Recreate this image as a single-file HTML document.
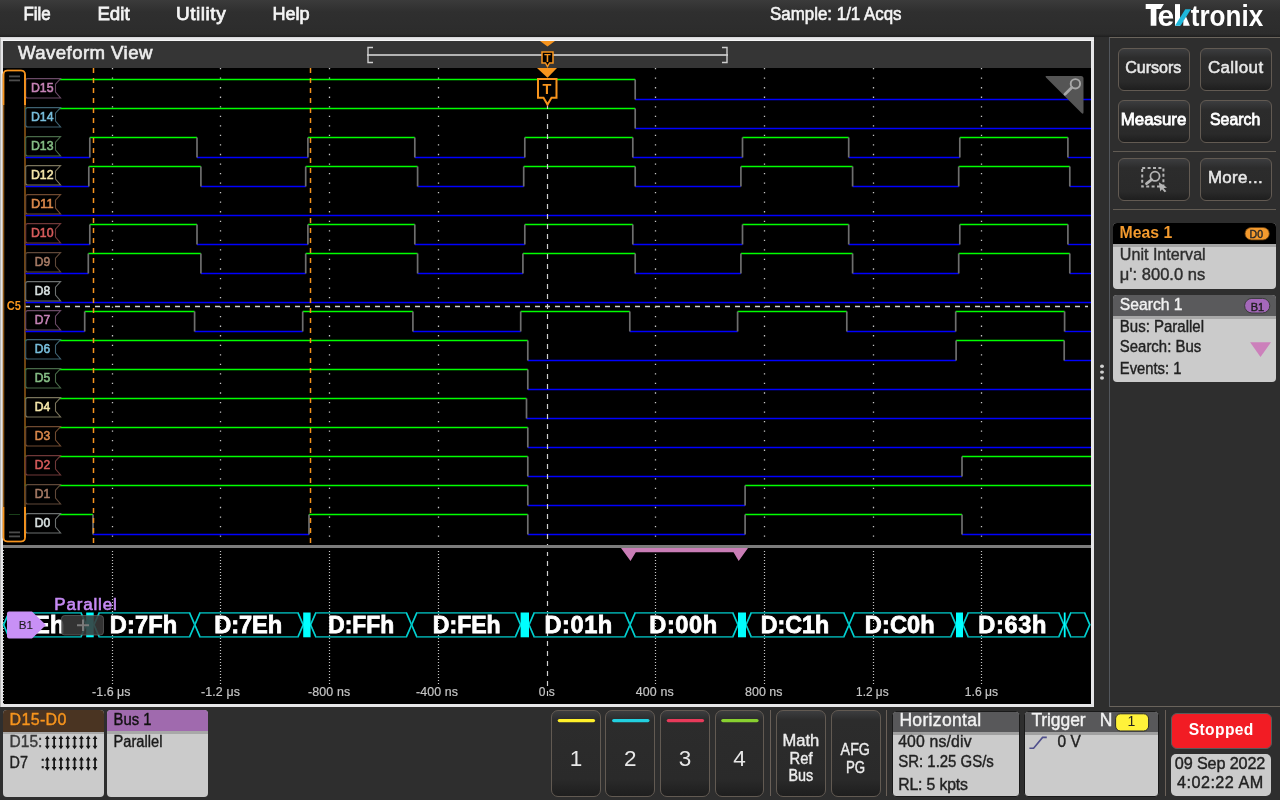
<!DOCTYPE html><html><head><meta charset="utf-8"><style>
*{margin:0;padding:0;box-sizing:border-box}
html,body{width:1280px;height:800px;overflow:hidden;background:#2e2e2e;font-family:"Liberation Sans", sans-serif;}
.a{position:absolute}
svg text{font-family:"Liberation Sans", sans-serif}
.btn{position:absolute;border:1.5px solid #625a52;border-radius:6px;background:linear-gradient(#3c3d3f 0px,#2c2c2c 9px,#2a2a2a 80%,#1e1e1e 100%)}
.card{position:absolute;border-radius:4px;overflow:hidden;background:#cbcbcb}

</style></head><body>
<div class="a" style="left:0;top:0;width:1280px;height:37px;background:linear-gradient(#3b3b3b 0px,#2f2f2f 12px,#2c2c2c 34px,#1e1e1e 37px)"></div>
<div class="a" style="left:0;top:37px;width:1094px;height:670px;background:#e6e6e8;border-left:1px solid #b8b8b8;border-top:1px solid #d8d8da"></div>
<div class="a" style="left:1px;top:40px;width:1093px;height:1px;background:#f6f6f6"></div>
<div class="a" style="left:3px;top:41px;width:1088px;height:27px;background:#353535"></div>
<div class="a" style="left:3px;top:68px;width:1088px;height:636px;background:#000"></div>
<div class="a" style="left:1109px;top:37px;width:200px;height:670px;border:1px solid #6a645c;border-left-color:#52565c;background:#2e2e2e"></div>
<div class="btn" style="left:1117.5px;top:48px;width:72px;height:43px"></div>
<div class="btn" style="left:1199.5px;top:48px;width:72px;height:43px"></div>
<div class="btn" style="left:1117.5px;top:100px;width:72px;height:43px"></div>
<div class="btn" style="left:1199.5px;top:100px;width:72px;height:43px"></div>
<div class="btn" style="left:1117.5px;top:158px;width:72px;height:43px"></div>
<div class="btn" style="left:1199.5px;top:158px;width:72px;height:43px"></div>
<div class="a" style="left:1113px;top:151px;width:163px;height:1px;background:#625c54"></div>
<div class="a" style="left:1113px;top:209px;width:163px;height:1px;background:#625c54"></div>
<div class="card" style="left:1113px;top:223px;width:163px;height:66px"><div style="height:21px;background:#000"></div><div style="height:3px;background:#a4a4a4"></div></div>
<div class="card" style="left:1113px;top:295px;width:163px;height:87px"><div style="height:21px;background:#5a5a5c"></div><div style="height:3px;background:#a8a8a8"></div></div>
<div class="card" style="left:3px;top:710px;width:101px;height:87px"><div style="height:21.5px;background:#4a3422"></div><div style="height:2px;background:#a8a8a8"></div></div>
<div class="card" style="left:107px;top:710px;width:101px;height:87px"><div style="height:21px;background:#a06aae"></div><div style="height:2.6px;background:#a8a8a8"></div></div>
<div class="btn" style="left:551px;top:710px;width:49.8px;height:86.5px;border-radius:7px"></div>
<div class="btn" style="left:605.4px;top:710px;width:49.8px;height:86.5px;border-radius:7px"></div>
<div class="btn" style="left:660px;top:710px;width:49.8px;height:86.5px;border-radius:7px"></div>
<div class="btn" style="left:714.5px;top:710px;width:49.8px;height:86.5px;border-radius:7px"></div>
<div class="btn" style="left:776.2px;top:710px;width:49.8px;height:86.5px;border-radius:7px"></div>
<div class="btn" style="left:831.2px;top:710px;width:49.8px;height:86.5px;border-radius:7px"></div>
<div class="a" style="left:770px;top:710px;width:1px;height:86px;background:#6a6058"></div>
<div class="a" style="left:886px;top:710px;width:1px;height:86px;background:#6a6058"></div>
<div class="a" style="left:1165px;top:710px;width:1px;height:86px;background:#6a6058"></div>
<div class="card" style="left:892px;top:710.5px;width:128px;height:86px;border:1.5px solid #1a1a1a"><div style="height:20px;background:#58585a"></div><div style="height:3px;background:#a0a0a0"></div></div>
<div class="card" style="left:1023.5px;top:710.5px;width:135px;height:86px;border:1.5px solid #1a1a1a"><div style="height:20px;background:#58585a"></div><div style="height:3px;background:#a0a0a0"></div></div>
<div class="a" style="left:1171px;top:713px;width:101px;height:36px;background:#f21c24;border:1.5px solid #5a5a5a;border-radius:6px"></div>
<div class="a" style="left:1171px;top:754px;width:100px;height:42px;background:#cbcbcb;border-radius:5px"></div>
<svg class="a" style="left:0;top:0;will-change:transform" width="1280" height="800">
<defs><clipPath id="cl1"><rect x="36" y="600" width="60" height="50"/></clipPath></defs>
<rect x="367" y="54" width="361" height="2" fill="#b4b4b4"/>
<path d="M373 47.5 H368 V62.5 H373" fill="none" stroke="#cfcfcf" stroke-width="1.4"/>
<path d="M722 47.5 H727 V62.5 H722" fill="none" stroke="#cfcfcf" stroke-width="1.4"/>
<path d="M540 41 L555 41 L547.5 46.5 Z" fill="#f7941d"/>
<path d="M542 52 H553 V63 H549.5 L547.5 66.5 L545.5 63 H542 Z" fill="#000" stroke="#f7941d" stroke-width="1.5"/>
<text x="547.5" y="61.6" font-size="10.5" font-weight="bold" text-anchor="middle" fill="#f7941d">T</text>
<line x1="112.5" y1="68" x2="112.5" y2="545" stroke="#c4c4c4" stroke-width="1.3" stroke-dasharray="1.3 8.24"/>
<line x1="112.5" y1="550.9" x2="112.5" y2="685" stroke="#c4c4c4" stroke-width="1.2" stroke-dasharray="1.2 1.8"/>
<line x1="220.5" y1="68" x2="220.5" y2="545" stroke="#c4c4c4" stroke-width="1.3" stroke-dasharray="1.3 8.24"/>
<line x1="220.5" y1="550.9" x2="220.5" y2="685" stroke="#c4c4c4" stroke-width="1.2" stroke-dasharray="1.2 1.8"/>
<line x1="329.5" y1="68" x2="329.5" y2="545" stroke="#c4c4c4" stroke-width="1.3" stroke-dasharray="1.3 8.24"/>
<line x1="329.5" y1="550.9" x2="329.5" y2="685" stroke="#c4c4c4" stroke-width="1.2" stroke-dasharray="1.2 1.8"/>
<line x1="438.5" y1="68" x2="438.5" y2="545" stroke="#c4c4c4" stroke-width="1.3" stroke-dasharray="1.3 8.24"/>
<line x1="438.5" y1="550.9" x2="438.5" y2="685" stroke="#c4c4c4" stroke-width="1.2" stroke-dasharray="1.2 1.8"/>
<line x1="655.5" y1="68" x2="655.5" y2="545" stroke="#c4c4c4" stroke-width="1.3" stroke-dasharray="1.3 8.24"/>
<line x1="655.5" y1="550.9" x2="655.5" y2="685" stroke="#c4c4c4" stroke-width="1.2" stroke-dasharray="1.2 1.8"/>
<line x1="764.5" y1="68" x2="764.5" y2="545" stroke="#c4c4c4" stroke-width="1.3" stroke-dasharray="1.3 8.24"/>
<line x1="764.5" y1="550.9" x2="764.5" y2="685" stroke="#c4c4c4" stroke-width="1.2" stroke-dasharray="1.2 1.8"/>
<line x1="873.5" y1="68" x2="873.5" y2="545" stroke="#c4c4c4" stroke-width="1.3" stroke-dasharray="1.3 8.24"/>
<line x1="873.5" y1="550.9" x2="873.5" y2="685" stroke="#c4c4c4" stroke-width="1.2" stroke-dasharray="1.2 1.8"/>
<line x1="981.5" y1="68" x2="981.5" y2="545" stroke="#c4c4c4" stroke-width="1.3" stroke-dasharray="1.3 8.24"/>
<line x1="981.5" y1="550.9" x2="981.5" y2="685" stroke="#c4c4c4" stroke-width="1.2" stroke-dasharray="1.2 1.8"/>
<line x1="25" y1="306.5" x2="1088" y2="306.5" stroke="#cccccc" stroke-width="1.3" stroke-dasharray="5 5"/>
<text transform="translate(6.80,310.00) scale(0.8889,1)" x="-0.00" y="0" font-size="12.50" font-weight="bold" fill="#f7941d">C5</text>
<rect x="3.5" y="70.5" width="21.5" height="471" rx="4" fill="none" stroke="#8c5616" stroke-width="1.6"/>
<path d="M3.5 105 V74.5 Q3.5 70.5 7.5 70.5 H21 Q25 70.5 25 74.5 V105" fill="none" stroke="#f7941d" stroke-width="1.6"/>
<path d="M3.5 507 V537.5 Q3.5 541.5 7.5 541.5 H21 Q25 541.5 25 537.5 V507" fill="none" stroke="#f7941d" stroke-width="1.6"/>
<rect x="9" y="75.5" width="11" height="1.8" fill="#4c4c4c"/>
<rect x="9" y="79.5" width="11" height="1.8" fill="#4c4c4c"/>
<rect x="9" y="531.5" width="11" height="1.8" fill="#4c4c4c"/>
<rect x="9" y="535.5" width="11" height="1.8" fill="#4c4c4c"/>
<rect x="9" y="514" width="11" height="1" fill="#1a401a"/>
<line x1="25.5" y1="79.5" x2="635.2" y2="79.5" stroke="#00ff00" stroke-width="1.4"/>
<line x1="635.2" y1="99.5" x2="1091" y2="99.5" stroke="#0000ff" stroke-width="1.4"/>
<line x1="635.2" y1="79.5" x2="635.2" y2="99.5" stroke="#6e6e6e" stroke-width="1.7"/>
<line x1="25.5" y1="108.5" x2="635.2" y2="108.5" stroke="#00ff00" stroke-width="1.4"/>
<line x1="635.2" y1="128.5" x2="1091" y2="128.5" stroke="#0000ff" stroke-width="1.4"/>
<line x1="635.2" y1="108.5" x2="635.2" y2="128.5" stroke="#6e6e6e" stroke-width="1.7"/>
<line x1="25.5" y1="157.5" x2="89.8" y2="157.5" stroke="#0000ff" stroke-width="1.4"/>
<line x1="89.8" y1="137.5" x2="197" y2="137.5" stroke="#00ff00" stroke-width="1.4"/>
<line x1="197" y1="157.5" x2="307.9" y2="157.5" stroke="#0000ff" stroke-width="1.4"/>
<line x1="307.9" y1="137.5" x2="414.8" y2="137.5" stroke="#00ff00" stroke-width="1.4"/>
<line x1="414.8" y1="157.5" x2="524.8" y2="157.5" stroke="#0000ff" stroke-width="1.4"/>
<line x1="524.8" y1="137.5" x2="632.8" y2="137.5" stroke="#00ff00" stroke-width="1.4"/>
<line x1="632.8" y1="157.5" x2="742.5" y2="157.5" stroke="#0000ff" stroke-width="1.4"/>
<line x1="742.5" y1="137.5" x2="848.7" y2="137.5" stroke="#00ff00" stroke-width="1.4"/>
<line x1="848.7" y1="157.5" x2="959.8" y2="157.5" stroke="#0000ff" stroke-width="1.4"/>
<line x1="959.8" y1="137.5" x2="1067.9" y2="137.5" stroke="#00ff00" stroke-width="1.4"/>
<line x1="1067.9" y1="157.5" x2="1091" y2="157.5" stroke="#0000ff" stroke-width="1.4"/>
<line x1="89.8" y1="137.5" x2="89.8" y2="157.5" stroke="#6e6e6e" stroke-width="1.7"/>
<line x1="197" y1="137.5" x2="197" y2="157.5" stroke="#6e6e6e" stroke-width="1.7"/>
<line x1="307.9" y1="137.5" x2="307.9" y2="157.5" stroke="#6e6e6e" stroke-width="1.7"/>
<line x1="414.8" y1="137.5" x2="414.8" y2="157.5" stroke="#6e6e6e" stroke-width="1.7"/>
<line x1="524.8" y1="137.5" x2="524.8" y2="157.5" stroke="#6e6e6e" stroke-width="1.7"/>
<line x1="632.8" y1="137.5" x2="632.8" y2="157.5" stroke="#6e6e6e" stroke-width="1.7"/>
<line x1="742.5" y1="137.5" x2="742.5" y2="157.5" stroke="#6e6e6e" stroke-width="1.7"/>
<line x1="848.7" y1="137.5" x2="848.7" y2="157.5" stroke="#6e6e6e" stroke-width="1.7"/>
<line x1="959.8" y1="137.5" x2="959.8" y2="157.5" stroke="#6e6e6e" stroke-width="1.7"/>
<line x1="1067.9" y1="137.5" x2="1067.9" y2="157.5" stroke="#6e6e6e" stroke-width="1.7"/>
<line x1="25.5" y1="186.5" x2="88.8" y2="186.5" stroke="#0000ff" stroke-width="1.4"/>
<line x1="88.8" y1="166.5" x2="200.9" y2="166.5" stroke="#00ff00" stroke-width="1.4"/>
<line x1="200.9" y1="186.5" x2="305.7" y2="186.5" stroke="#0000ff" stroke-width="1.4"/>
<line x1="305.7" y1="166.5" x2="417.6" y2="166.5" stroke="#00ff00" stroke-width="1.4"/>
<line x1="417.6" y1="186.5" x2="523.7" y2="186.5" stroke="#0000ff" stroke-width="1.4"/>
<line x1="523.7" y1="166.5" x2="635.2" y2="166.5" stroke="#00ff00" stroke-width="1.4"/>
<line x1="635.2" y1="186.5" x2="740.9" y2="186.5" stroke="#0000ff" stroke-width="1.4"/>
<line x1="740.9" y1="166.5" x2="852.6" y2="166.5" stroke="#00ff00" stroke-width="1.4"/>
<line x1="852.6" y1="186.5" x2="958.7" y2="186.5" stroke="#0000ff" stroke-width="1.4"/>
<line x1="958.7" y1="166.5" x2="1069.8" y2="166.5" stroke="#00ff00" stroke-width="1.4"/>
<line x1="1069.8" y1="186.5" x2="1091" y2="186.5" stroke="#0000ff" stroke-width="1.4"/>
<line x1="88.8" y1="166.5" x2="88.8" y2="186.5" stroke="#6e6e6e" stroke-width="1.7"/>
<line x1="200.9" y1="166.5" x2="200.9" y2="186.5" stroke="#6e6e6e" stroke-width="1.7"/>
<line x1="305.7" y1="166.5" x2="305.7" y2="186.5" stroke="#6e6e6e" stroke-width="1.7"/>
<line x1="417.6" y1="166.5" x2="417.6" y2="186.5" stroke="#6e6e6e" stroke-width="1.7"/>
<line x1="523.7" y1="166.5" x2="523.7" y2="186.5" stroke="#6e6e6e" stroke-width="1.7"/>
<line x1="635.2" y1="166.5" x2="635.2" y2="186.5" stroke="#6e6e6e" stroke-width="1.7"/>
<line x1="740.9" y1="166.5" x2="740.9" y2="186.5" stroke="#6e6e6e" stroke-width="1.7"/>
<line x1="852.6" y1="166.5" x2="852.6" y2="186.5" stroke="#6e6e6e" stroke-width="1.7"/>
<line x1="958.7" y1="166.5" x2="958.7" y2="186.5" stroke="#6e6e6e" stroke-width="1.7"/>
<line x1="1069.8" y1="166.5" x2="1069.8" y2="186.5" stroke="#6e6e6e" stroke-width="1.7"/>
<line x1="25.5" y1="215.5" x2="1091" y2="215.5" stroke="#0000ff" stroke-width="1.4"/>
<line x1="25.5" y1="244.5" x2="89.8" y2="244.5" stroke="#0000ff" stroke-width="1.4"/>
<line x1="89.8" y1="224.5" x2="197" y2="224.5" stroke="#00ff00" stroke-width="1.4"/>
<line x1="197" y1="244.5" x2="307.9" y2="244.5" stroke="#0000ff" stroke-width="1.4"/>
<line x1="307.9" y1="224.5" x2="414.8" y2="224.5" stroke="#00ff00" stroke-width="1.4"/>
<line x1="414.8" y1="244.5" x2="524.8" y2="244.5" stroke="#0000ff" stroke-width="1.4"/>
<line x1="524.8" y1="224.5" x2="632.8" y2="224.5" stroke="#00ff00" stroke-width="1.4"/>
<line x1="632.8" y1="244.5" x2="742.5" y2="244.5" stroke="#0000ff" stroke-width="1.4"/>
<line x1="742.5" y1="224.5" x2="848.7" y2="224.5" stroke="#00ff00" stroke-width="1.4"/>
<line x1="848.7" y1="244.5" x2="959.8" y2="244.5" stroke="#0000ff" stroke-width="1.4"/>
<line x1="959.8" y1="224.5" x2="1067.9" y2="224.5" stroke="#00ff00" stroke-width="1.4"/>
<line x1="1067.9" y1="244.5" x2="1091" y2="244.5" stroke="#0000ff" stroke-width="1.4"/>
<line x1="89.8" y1="224.5" x2="89.8" y2="244.5" stroke="#6e6e6e" stroke-width="1.7"/>
<line x1="197" y1="224.5" x2="197" y2="244.5" stroke="#6e6e6e" stroke-width="1.7"/>
<line x1="307.9" y1="224.5" x2="307.9" y2="244.5" stroke="#6e6e6e" stroke-width="1.7"/>
<line x1="414.8" y1="224.5" x2="414.8" y2="244.5" stroke="#6e6e6e" stroke-width="1.7"/>
<line x1="524.8" y1="224.5" x2="524.8" y2="244.5" stroke="#6e6e6e" stroke-width="1.7"/>
<line x1="632.8" y1="224.5" x2="632.8" y2="244.5" stroke="#6e6e6e" stroke-width="1.7"/>
<line x1="742.5" y1="224.5" x2="742.5" y2="244.5" stroke="#6e6e6e" stroke-width="1.7"/>
<line x1="848.7" y1="224.5" x2="848.7" y2="244.5" stroke="#6e6e6e" stroke-width="1.7"/>
<line x1="959.8" y1="224.5" x2="959.8" y2="244.5" stroke="#6e6e6e" stroke-width="1.7"/>
<line x1="1067.9" y1="224.5" x2="1067.9" y2="244.5" stroke="#6e6e6e" stroke-width="1.7"/>
<line x1="25.5" y1="273.5" x2="88.3" y2="273.5" stroke="#0000ff" stroke-width="1.4"/>
<line x1="88.3" y1="253.5" x2="200.9" y2="253.5" stroke="#00ff00" stroke-width="1.4"/>
<line x1="200.9" y1="273.5" x2="305.7" y2="273.5" stroke="#0000ff" stroke-width="1.4"/>
<line x1="305.7" y1="253.5" x2="417.6" y2="253.5" stroke="#00ff00" stroke-width="1.4"/>
<line x1="417.6" y1="273.5" x2="522.9" y2="273.5" stroke="#0000ff" stroke-width="1.4"/>
<line x1="522.9" y1="253.5" x2="635.2" y2="253.5" stroke="#00ff00" stroke-width="1.4"/>
<line x1="635.2" y1="273.5" x2="740.9" y2="273.5" stroke="#0000ff" stroke-width="1.4"/>
<line x1="740.9" y1="253.5" x2="852.6" y2="253.5" stroke="#00ff00" stroke-width="1.4"/>
<line x1="852.6" y1="273.5" x2="958.7" y2="273.5" stroke="#0000ff" stroke-width="1.4"/>
<line x1="958.7" y1="253.5" x2="1069.8" y2="253.5" stroke="#00ff00" stroke-width="1.4"/>
<line x1="1069.8" y1="273.5" x2="1091" y2="273.5" stroke="#0000ff" stroke-width="1.4"/>
<line x1="88.3" y1="253.5" x2="88.3" y2="273.5" stroke="#6e6e6e" stroke-width="1.7"/>
<line x1="200.9" y1="253.5" x2="200.9" y2="273.5" stroke="#6e6e6e" stroke-width="1.7"/>
<line x1="305.7" y1="253.5" x2="305.7" y2="273.5" stroke="#6e6e6e" stroke-width="1.7"/>
<line x1="417.6" y1="253.5" x2="417.6" y2="273.5" stroke="#6e6e6e" stroke-width="1.7"/>
<line x1="522.9" y1="253.5" x2="522.9" y2="273.5" stroke="#6e6e6e" stroke-width="1.7"/>
<line x1="635.2" y1="253.5" x2="635.2" y2="273.5" stroke="#6e6e6e" stroke-width="1.7"/>
<line x1="740.9" y1="253.5" x2="740.9" y2="273.5" stroke="#6e6e6e" stroke-width="1.7"/>
<line x1="852.6" y1="253.5" x2="852.6" y2="273.5" stroke="#6e6e6e" stroke-width="1.7"/>
<line x1="958.7" y1="253.5" x2="958.7" y2="273.5" stroke="#6e6e6e" stroke-width="1.7"/>
<line x1="1069.8" y1="253.5" x2="1069.8" y2="273.5" stroke="#6e6e6e" stroke-width="1.7"/>
<line x1="25.5" y1="302.5" x2="1091" y2="302.5" stroke="#0000ff" stroke-width="1.4"/>
<line x1="25.5" y1="331.5" x2="84.7" y2="331.5" stroke="#0000ff" stroke-width="1.4"/>
<line x1="84.7" y1="311.5" x2="194.6" y2="311.5" stroke="#00ff00" stroke-width="1.4"/>
<line x1="194.6" y1="331.5" x2="302.7" y2="331.5" stroke="#0000ff" stroke-width="1.4"/>
<line x1="302.7" y1="311.5" x2="412.9" y2="311.5" stroke="#00ff00" stroke-width="1.4"/>
<line x1="412.9" y1="331.5" x2="520.7" y2="331.5" stroke="#0000ff" stroke-width="1.4"/>
<line x1="520.7" y1="311.5" x2="629.8" y2="311.5" stroke="#00ff00" stroke-width="1.4"/>
<line x1="629.8" y1="331.5" x2="737.6" y2="331.5" stroke="#0000ff" stroke-width="1.4"/>
<line x1="737.6" y1="311.5" x2="846.8" y2="311.5" stroke="#00ff00" stroke-width="1.4"/>
<line x1="846.8" y1="331.5" x2="955.7" y2="331.5" stroke="#0000ff" stroke-width="1.4"/>
<line x1="955.7" y1="311.5" x2="1064.6" y2="311.5" stroke="#00ff00" stroke-width="1.4"/>
<line x1="1064.6" y1="331.5" x2="1091" y2="331.5" stroke="#0000ff" stroke-width="1.4"/>
<line x1="84.7" y1="311.5" x2="84.7" y2="331.5" stroke="#6e6e6e" stroke-width="1.7"/>
<line x1="194.6" y1="311.5" x2="194.6" y2="331.5" stroke="#6e6e6e" stroke-width="1.7"/>
<line x1="302.7" y1="311.5" x2="302.7" y2="331.5" stroke="#6e6e6e" stroke-width="1.7"/>
<line x1="412.9" y1="311.5" x2="412.9" y2="331.5" stroke="#6e6e6e" stroke-width="1.7"/>
<line x1="520.7" y1="311.5" x2="520.7" y2="331.5" stroke="#6e6e6e" stroke-width="1.7"/>
<line x1="629.8" y1="311.5" x2="629.8" y2="331.5" stroke="#6e6e6e" stroke-width="1.7"/>
<line x1="737.6" y1="311.5" x2="737.6" y2="331.5" stroke="#6e6e6e" stroke-width="1.7"/>
<line x1="846.8" y1="311.5" x2="846.8" y2="331.5" stroke="#6e6e6e" stroke-width="1.7"/>
<line x1="955.7" y1="311.5" x2="955.7" y2="331.5" stroke="#6e6e6e" stroke-width="1.7"/>
<line x1="1064.6" y1="311.5" x2="1064.6" y2="331.5" stroke="#6e6e6e" stroke-width="1.7"/>
<line x1="25.5" y1="340.5" x2="527.8" y2="340.5" stroke="#00ff00" stroke-width="1.4"/>
<line x1="527.8" y1="360.5" x2="956.1" y2="360.5" stroke="#0000ff" stroke-width="1.4"/>
<line x1="956.1" y1="340.5" x2="1064.2" y2="340.5" stroke="#00ff00" stroke-width="1.4"/>
<line x1="1064.2" y1="360.5" x2="1091" y2="360.5" stroke="#0000ff" stroke-width="1.4"/>
<line x1="527.8" y1="340.5" x2="527.8" y2="360.5" stroke="#6e6e6e" stroke-width="1.7"/>
<line x1="956.1" y1="340.5" x2="956.1" y2="360.5" stroke="#6e6e6e" stroke-width="1.7"/>
<line x1="1064.2" y1="340.5" x2="1064.2" y2="360.5" stroke="#6e6e6e" stroke-width="1.7"/>
<line x1="25.5" y1="369.5" x2="527.8" y2="369.5" stroke="#00ff00" stroke-width="1.4"/>
<line x1="527.8" y1="389.5" x2="1091" y2="389.5" stroke="#0000ff" stroke-width="1.4"/>
<line x1="527.8" y1="369.5" x2="527.8" y2="389.5" stroke="#6e6e6e" stroke-width="1.7"/>
<line x1="25.5" y1="398.5" x2="526.5" y2="398.5" stroke="#00ff00" stroke-width="1.4"/>
<line x1="526.5" y1="418.5" x2="1091" y2="418.5" stroke="#0000ff" stroke-width="1.4"/>
<line x1="526.5" y1="398.5" x2="526.5" y2="418.5" stroke="#6e6e6e" stroke-width="1.7"/>
<line x1="25.5" y1="427.5" x2="527.8" y2="427.5" stroke="#00ff00" stroke-width="1.4"/>
<line x1="527.8" y1="447.5" x2="1091" y2="447.5" stroke="#0000ff" stroke-width="1.4"/>
<line x1="527.8" y1="427.5" x2="527.8" y2="447.5" stroke="#6e6e6e" stroke-width="1.7"/>
<line x1="25.5" y1="456.5" x2="527.8" y2="456.5" stroke="#00ff00" stroke-width="1.4"/>
<line x1="527.8" y1="476.5" x2="962" y2="476.5" stroke="#0000ff" stroke-width="1.4"/>
<line x1="962" y1="456.5" x2="1091" y2="456.5" stroke="#00ff00" stroke-width="1.4"/>
<line x1="527.8" y1="456.5" x2="527.8" y2="476.5" stroke="#6e6e6e" stroke-width="1.7"/>
<line x1="962" y1="456.5" x2="962" y2="476.5" stroke="#6e6e6e" stroke-width="1.7"/>
<line x1="25.5" y1="485.5" x2="527.8" y2="485.5" stroke="#00ff00" stroke-width="1.4"/>
<line x1="527.8" y1="505.5" x2="745.1" y2="505.5" stroke="#0000ff" stroke-width="1.4"/>
<line x1="745.1" y1="485.5" x2="1091" y2="485.5" stroke="#00ff00" stroke-width="1.4"/>
<line x1="527.8" y1="485.5" x2="527.8" y2="505.5" stroke="#6e6e6e" stroke-width="1.7"/>
<line x1="745.1" y1="485.5" x2="745.1" y2="505.5" stroke="#6e6e6e" stroke-width="1.7"/>
<line x1="25.5" y1="514.5" x2="93" y2="514.5" stroke="#00ff00" stroke-width="1.4"/>
<line x1="93" y1="534.5" x2="309" y2="534.5" stroke="#0000ff" stroke-width="1.4"/>
<line x1="309" y1="514.5" x2="527.8" y2="514.5" stroke="#00ff00" stroke-width="1.4"/>
<line x1="527.8" y1="534.5" x2="745.1" y2="534.5" stroke="#0000ff" stroke-width="1.4"/>
<line x1="745.1" y1="514.5" x2="962" y2="514.5" stroke="#00ff00" stroke-width="1.4"/>
<line x1="962" y1="534.5" x2="1091" y2="534.5" stroke="#0000ff" stroke-width="1.4"/>
<line x1="93" y1="514.5" x2="93" y2="534.5" stroke="#6e6e6e" stroke-width="1.7"/>
<line x1="309" y1="514.5" x2="309" y2="534.5" stroke="#6e6e6e" stroke-width="1.7"/>
<line x1="527.8" y1="514.5" x2="527.8" y2="534.5" stroke="#6e6e6e" stroke-width="1.7"/>
<line x1="745.1" y1="514.5" x2="745.1" y2="534.5" stroke="#6e6e6e" stroke-width="1.7"/>
<line x1="962" y1="514.5" x2="962" y2="534.5" stroke="#6e6e6e" stroke-width="1.7"/>
<path d="M1046 76 H1081 Q1083.5 76 1083.5 78.5 V112 Q1083.5 115 1081.5 113 L1046 77.5 Q1045 76 1046 76 Z" fill="#555"/>
<circle cx="1075.4" cy="83.8" r="4.7" fill="none" stroke="#a8a8a8" stroke-width="1.9"/>
<line x1="1071.8" y1="87.4" x2="1065" y2="94.2" stroke="#a8a8a8" stroke-width="2.8" stroke-linecap="round"/>
<line x1="547.5" y1="104" x2="547.5" y2="545" stroke="#cfcfcf" stroke-width="1.2" stroke-dasharray="5 5"/>
<line x1="547.5" y1="552" x2="547.5" y2="699" stroke="#cfcfcf" stroke-width="1.2" stroke-dasharray="5 5" stroke-dashoffset="1"/>
<line x1="93.5" y1="68" x2="93.5" y2="545" stroke="#f7941d" stroke-width="1.5" stroke-dasharray="5 5"/>
<line x1="310.5" y1="68" x2="310.5" y2="545" stroke="#f7941d" stroke-width="1.5" stroke-dasharray="5 5"/>
<path d="M27.7 78.6 H60.6 L55.5 84.19999999999999 V92.0 L60.6 98.0 H27.7 Q25.7 98.0 25.7 96.0 V80.6 Q25.7 78.6 27.7 78.6 Z" fill="#000" stroke="#6a4a66" stroke-width="1.1"/>
<text transform="translate(31.00,92.00) scale(0.9224,1)" x="-0.00" y="0" font-size="13.30" fill="#c683b6" stroke="#c683b6" stroke-width="0.6">D15</text>
<path d="M27.7 107.6 H60.6 L55.5 113.19999999999999 V121.0 L60.6 127.0 H27.7 Q25.7 127.0 25.7 125.0 V109.6 Q25.7 107.6 27.7 107.6 Z" fill="#000" stroke="#3e6272" stroke-width="1.1"/>
<text transform="translate(31.00,121.00) scale(0.9224,1)" x="-0.00" y="0" font-size="13.30" fill="#78bedc" stroke="#78bedc" stroke-width="0.6">D14</text>
<path d="M27.7 136.6 H60.6 L55.5 142.2 V150.0 L60.6 156.0 H27.7 Q25.7 156.0 25.7 154.0 V138.6 Q25.7 136.6 27.7 136.6 Z" fill="#000" stroke="#486a48" stroke-width="1.1"/>
<text transform="translate(31.00,150.00) scale(0.9224,1)" x="-0.00" y="0" font-size="13.30" fill="#86be86" stroke="#86be86" stroke-width="0.6">D13</text>
<path d="M27.7 165.6 H60.6 L55.5 171.2 V179.0 L60.6 185.0 H27.7 Q25.7 185.0 25.7 183.0 V167.6 Q25.7 165.6 27.7 165.6 Z" fill="#000" stroke="#7a745c" stroke-width="1.1"/>
<text transform="translate(31.00,179.00) scale(0.9224,1)" x="-0.00" y="0" font-size="13.30" fill="#f4e6aa" stroke="#f4e6aa" stroke-width="0.6">D12</text>
<path d="M27.7 194.6 H60.6 L55.5 200.2 V208.0 L60.6 214.0 H27.7 Q25.7 214.0 25.7 212.0 V196.6 Q25.7 194.6 27.7 194.6 Z" fill="#000" stroke="#704a30" stroke-width="1.1"/>
<text transform="translate(31.00,208.00) scale(0.9612,1)" x="-0.00" y="0" font-size="13.30" fill="#dc8a4c" stroke="#dc8a4c" stroke-width="0.6">D11</text>
<path d="M27.7 223.6 H60.6 L55.5 229.2 V237.0 L60.6 243.0 H27.7 Q25.7 243.0 25.7 241.0 V225.6 Q25.7 223.6 27.7 223.6 Z" fill="#000" stroke="#703838" stroke-width="1.1"/>
<text transform="translate(31.00,237.00) scale(0.9224,1)" x="-0.00" y="0" font-size="13.30" fill="#d85c5c" stroke="#d85c5c" stroke-width="0.6">D10</text>
<path d="M27.7 252.6 H60.6 L55.5 258.2 V266.0 L60.6 272.0 H27.7 Q25.7 272.0 25.7 270.0 V254.6 Q25.7 252.6 27.7 252.6 Z" fill="#000" stroke="#604838" stroke-width="1.1"/>
<text transform="translate(34.80,266.00) scale(0.9060,1)" x="-0.00" y="0" font-size="13.30" fill="#a87c66" stroke="#a87c66" stroke-width="0.6">D9</text>
<path d="M27.7 281.6 H60.6 L55.5 287.20000000000005 V295.0 L60.6 301.0 H27.7 Q25.7 301.0 25.7 299.0 V283.6 Q25.7 281.6 27.7 281.6 Z" fill="#000" stroke="#6c7070" stroke-width="1.1"/>
<text transform="translate(34.80,295.00) scale(0.9060,1)" x="-0.00" y="0" font-size="13.30" fill="#d8e0e0" stroke="#d8e0e0" stroke-width="0.6">D8</text>
<path d="M27.7 310.6 H60.6 L55.5 316.20000000000005 V324.0 L60.6 330.0 H27.7 Q25.7 330.0 25.7 328.0 V312.6 Q25.7 310.6 27.7 310.6 Z" fill="#000" stroke="#6a4a66" stroke-width="1.1"/>
<text transform="translate(34.80,324.00) scale(0.9060,1)" x="-0.00" y="0" font-size="13.30" fill="#c683b6" stroke="#c683b6" stroke-width="0.6">D7</text>
<path d="M27.7 339.6 H60.6 L55.5 345.20000000000005 V353.0 L60.6 359.0 H27.7 Q25.7 359.0 25.7 357.0 V341.6 Q25.7 339.6 27.7 339.6 Z" fill="#000" stroke="#3e6272" stroke-width="1.1"/>
<text transform="translate(34.80,353.00) scale(0.9060,1)" x="-0.00" y="0" font-size="13.30" fill="#78bedc" stroke="#78bedc" stroke-width="0.6">D6</text>
<path d="M27.7 368.6 H60.6 L55.5 374.20000000000005 V382.0 L60.6 388.0 H27.7 Q25.7 388.0 25.7 386.0 V370.6 Q25.7 368.6 27.7 368.6 Z" fill="#000" stroke="#486a48" stroke-width="1.1"/>
<text transform="translate(34.80,382.00) scale(0.9060,1)" x="-0.00" y="0" font-size="13.30" fill="#86be86" stroke="#86be86" stroke-width="0.6">D5</text>
<path d="M27.7 397.6 H60.6 L55.5 403.20000000000005 V411.0 L60.6 417.0 H27.7 Q25.7 417.0 25.7 415.0 V399.6 Q25.7 397.6 27.7 397.6 Z" fill="#000" stroke="#7a745c" stroke-width="1.1"/>
<text transform="translate(34.80,411.00) scale(0.9060,1)" x="-0.00" y="0" font-size="13.30" fill="#f4e6aa" stroke="#f4e6aa" stroke-width="0.6">D4</text>
<path d="M27.7 426.6 H60.6 L55.5 432.20000000000005 V440.0 L60.6 446.0 H27.7 Q25.7 446.0 25.7 444.0 V428.6 Q25.7 426.6 27.7 426.6 Z" fill="#000" stroke="#704a30" stroke-width="1.1"/>
<text transform="translate(34.80,440.00) scale(0.9060,1)" x="-0.00" y="0" font-size="13.30" fill="#dc8a4c" stroke="#dc8a4c" stroke-width="0.6">D3</text>
<path d="M27.7 455.6 H60.6 L55.5 461.20000000000005 V469.0 L60.6 475.0 H27.7 Q25.7 475.0 25.7 473.0 V457.6 Q25.7 455.6 27.7 455.6 Z" fill="#000" stroke="#703838" stroke-width="1.1"/>
<text transform="translate(34.80,469.00) scale(0.9060,1)" x="-0.00" y="0" font-size="13.30" fill="#d85c5c" stroke="#d85c5c" stroke-width="0.6">D2</text>
<path d="M27.7 484.6 H60.6 L55.5 490.20000000000005 V498.0 L60.6 504.0 H27.7 Q25.7 504.0 25.7 502.0 V486.6 Q25.7 484.6 27.7 484.6 Z" fill="#000" stroke="#604838" stroke-width="1.1"/>
<text transform="translate(34.80,498.00) scale(0.9060,1)" x="-0.00" y="0" font-size="13.30" fill="#a87c66" stroke="#a87c66" stroke-width="0.6">D1</text>
<path d="M27.7 513.6 H60.6 L55.5 519.2 V527.0 L60.6 533.0 H27.7 Q25.7 533.0 25.7 531.0 V515.6 Q25.7 513.6 27.7 513.6 Z" fill="#000" stroke="#6c7070" stroke-width="1.1"/>
<text transform="translate(34.80,527.00) scale(0.9060,1)" x="-0.00" y="0" font-size="13.30" fill="#d8e0e0" stroke="#d8e0e0" stroke-width="0.6">D0</text>
<line x1="25" y1="74.5" x2="25" y2="105" stroke="#f7941d" stroke-width="1.8"/>
<line x1="25" y1="507" x2="25" y2="537.5" stroke="#f7941d" stroke-width="1.8"/>
<path d="M537 68 H557 L547.5 77.8 Z" fill="#f7941d"/>
<path d="M538 79 H556.5 V97.8 H551.5 L547.5 104.5 L543.5 97.8 H538 Z" fill="#000" stroke="#f7941d" stroke-width="2"/>
<text x="542.50" y="94.00" font-size="14.50" font-weight="bold" fill="#f7941d">T</text>
<rect x="3" y="545" width="1088" height="3" fill="#7c7c7c"/>
<line x1="3.5" y1="550" x2="3.5" y2="704" stroke="#bbb" stroke-width="1" stroke-dasharray="1 2"/>
<path d="M621 548 H748 L738.7 561 L733.5 552.3 H635.8 L630.5 561 Z" fill="#c97db6"/>
<text x="54.30" y="609.70" font-size="17.00" letter-spacing="0.815" fill="#c68af4" stroke="#c68af4" stroke-width="0.6">Parallel</text>
<path d="M3.6 624.8 L8.8 612.8 H81.0 L86.2 624.8 L81.0 636.8 H8.8 Z" fill="none" stroke="#009494" stroke-width="1.8" stroke-linejoin="miter"/>
<path d="M8.8 612.8 L3.6 624.8 L8.8 636.8 M81.0 612.8 L86.2 624.8 L81.0 636.8" fill="none" stroke="#00d8d8" stroke-width="1.1"/>
<path d="M94 624.8 L99.2 612.8 H189.60000000000002 L194.8 624.8 L189.60000000000002 636.8 H99.2 Z" fill="none" stroke="#009494" stroke-width="1.8" stroke-linejoin="miter"/>
<path d="M99.2 612.8 L94 624.8 L99.2 636.8 M189.60000000000002 612.8 L194.8 624.8 L189.60000000000002 636.8" fill="none" stroke="#00d8d8" stroke-width="1.1"/>
<path d="M194.8 624.8 L200.0 612.8 H298.0 L303.2 624.8 L298.0 636.8 H200.0 Z" fill="none" stroke="#009494" stroke-width="1.8" stroke-linejoin="miter"/>
<path d="M200.0 612.8 L194.8 624.8 L200.0 636.8 M298.0 612.8 L303.2 624.8 L298.0 636.8" fill="none" stroke="#00d8d8" stroke-width="1.1"/>
<path d="M310.6 624.8 L315.8 612.8 H406.40000000000003 L411.6 624.8 L406.40000000000003 636.8 H315.8 Z" fill="none" stroke="#009494" stroke-width="1.8" stroke-linejoin="miter"/>
<path d="M315.8 612.8 L310.6 624.8 L315.8 636.8 M406.40000000000003 612.8 L411.6 624.8 L406.40000000000003 636.8" fill="none" stroke="#00d8d8" stroke-width="1.1"/>
<path d="M411.6 624.8 L416.8 612.8 H515.4 L520.6 624.8 L515.4 636.8 H416.8 Z" fill="none" stroke="#009494" stroke-width="1.8" stroke-linejoin="miter"/>
<path d="M416.8 612.8 L411.6 624.8 L416.8 636.8 M515.4 612.8 L520.6 624.8 L515.4 636.8" fill="none" stroke="#00d8d8" stroke-width="1.1"/>
<path d="M529 624.8 L534.2 612.8 H624.8 L630 624.8 L624.8 636.8 H534.2 Z" fill="none" stroke="#009494" stroke-width="1.8" stroke-linejoin="miter"/>
<path d="M534.2 612.8 L529 624.8 L534.2 636.8 M624.8 612.8 L630 624.8 L624.8 636.8" fill="none" stroke="#00d8d8" stroke-width="1.1"/>
<path d="M630 624.8 L635.2 612.8 H732.8 L738 624.8 L732.8 636.8 H635.2 Z" fill="none" stroke="#009494" stroke-width="1.8" stroke-linejoin="miter"/>
<path d="M635.2 612.8 L630 624.8 L635.2 636.8 M732.8 612.8 L738 624.8 L732.8 636.8" fill="none" stroke="#00d8d8" stroke-width="1.1"/>
<path d="M746 624.8 L751.2 612.8 H843.8 L849 624.8 L843.8 636.8 H751.2 Z" fill="none" stroke="#009494" stroke-width="1.8" stroke-linejoin="miter"/>
<path d="M751.2 612.8 L746 624.8 L751.2 636.8 M843.8 612.8 L849 624.8 L843.8 636.8" fill="none" stroke="#00d8d8" stroke-width="1.1"/>
<path d="M849 624.8 L854.2 612.8 H950.8 L956 624.8 L950.8 636.8 H854.2 Z" fill="none" stroke="#009494" stroke-width="1.8" stroke-linejoin="miter"/>
<path d="M854.2 612.8 L849 624.8 L854.2 636.8 M950.8 612.8 L956 624.8 L950.8 636.8" fill="none" stroke="#00d8d8" stroke-width="1.1"/>
<path d="M963 624.8 L968.2 612.8 H1058.8 L1064 624.8 L1058.8 636.8 H968.2 Z" fill="none" stroke="#009494" stroke-width="1.8" stroke-linejoin="miter"/>
<path d="M968.2 612.8 L963 624.8 L968.2 636.8 M1058.8 612.8 L1064 624.8 L1058.8 636.8" fill="none" stroke="#00d8d8" stroke-width="1.1"/>
<path d="M1065.6 624.8 L1070.8 612.8 H1084.6 L1089.8 624.8 L1084.6 636.8 H1070.8 Z" fill="none" stroke="#009494" stroke-width="1.8" stroke-linejoin="miter"/>
<path d="M1070.8 612.8 L1065.6 624.8 L1070.8 636.8 M1084.6 612.8 L1089.8 624.8 L1084.6 636.8" fill="none" stroke="#00d8d8" stroke-width="1.1"/>
<rect x="86.2" y="612.5" width="7.5" height="24.8" fill="#00ffff"/>
<rect x="303.2" y="612.5" width="7.400000000000034" height="24.8" fill="#00ffff"/>
<rect x="520.6" y="612.5" width="8.399999999999977" height="24.8" fill="#00ffff"/>
<rect x="738" y="612.5" width="8" height="24.8" fill="#00ffff"/>
<rect x="956" y="612.5" width="7" height="24.8" fill="#00ffff"/>
<rect x="1063.8" y="612.5" width="1.7999999999999545" height="24.8" fill="#00ffff"/>
<text x="109.80" y="632.80" font-size="23.60" font-weight="bold" letter-spacing="0.135" fill="#ffffff" stroke="#ffffff" stroke-width="0.8">D:7Fh</text>
<text x="214.30" y="632.80" font-size="23.60" font-weight="bold" letter-spacing="-0.070" fill="#ffffff" stroke="#ffffff" stroke-width="0.8">D:7Eh</text>
<text transform="translate(328.30,632.80) scale(0.9669,1)" x="-0.00" y="0" font-size="23.60" font-weight="bold" fill="#ffffff" stroke="#ffffff" stroke-width="0.8">D:FFh</text>
<text transform="translate(432.80,632.80) scale(0.9773,1)" x="-0.00" y="0" font-size="23.60" font-weight="bold" fill="#ffffff" stroke="#ffffff" stroke-width="0.8">D:FEh</text>
<text x="544.55" y="632.80" font-size="23.60" font-weight="bold" letter-spacing="0.522" fill="#ffffff" stroke="#ffffff" stroke-width="0.8">D:01h</text>
<text x="649.30" y="632.80" font-size="23.60" font-weight="bold" letter-spacing="0.585" fill="#ffffff" stroke="#ffffff" stroke-width="0.8">D:00h</text>
<text transform="translate(760.80,632.80) scale(0.9845,1)" x="-0.00" y="0" font-size="23.60" font-weight="bold" fill="#ffffff" stroke="#ffffff" stroke-width="0.8">D:C1h</text>
<text x="864.80" y="632.80" font-size="23.60" font-weight="bold" letter-spacing="0.105" fill="#ffffff" stroke="#ffffff" stroke-width="0.8">D:C0h</text>
<text x="978.30" y="632.80" font-size="23.60" font-weight="bold" letter-spacing="0.647" fill="#ffffff" stroke="#ffffff" stroke-width="0.8">D:63h</text>
<g clip-path="url(#cl1)"><text x="-4.60" y="632.80" font-size="23.60" font-weight="bold" letter-spacing="0.180" fill="#ffffff" stroke="#ffffff" stroke-width="0.8">D:7Eh</text></g>
<rect x="61.5" y="615.5" width="42" height="19.5" rx="3" fill="rgba(58,58,58,0.88)" stroke="rgba(110,110,110,0.6)" stroke-width="1"/>
<path d="M77 625.3 H89 M83 619.5 V631" stroke="#7a7a7a" stroke-width="2"/>
<path d="M9 611.5 H32 L46 625 L32 638.6 H9 Q7 638.6 7 636.6 V613.5 Q7 611.5 9 611.5 Z" fill="#c890f6"/>
<text x="18.80" y="628.60" font-size="11.60" fill="#1e1e1e" stroke="#1e1e1e" stroke-width="0.1">B1</text>
<text x="92.00" y="695.80" font-size="12.40" letter-spacing="0.058" fill="#c4c4c4" stroke="#c4c4c4" stroke-width="0.2">-1.6 μs</text>
<text x="201.00" y="695.80" font-size="12.40" letter-spacing="0.124" fill="#c4c4c4" stroke="#c4c4c4" stroke-width="0.2">-1.2 μs</text>
<text x="308.10" y="695.80" font-size="12.40" letter-spacing="0.124" fill="#c4c4c4" stroke="#c4c4c4" stroke-width="0.2">-800 ns</text>
<text x="416.10" y="695.80" font-size="12.40" letter-spacing="0.091" fill="#c4c4c4" stroke="#c4c4c4" stroke-width="0.2">-400 ns</text>
<text transform="translate(538.85,695.80) scale(0.9703,1)" x="-0.00" y="0" font-size="12.40" fill="#c4c4c4" stroke="#c4c4c4" stroke-width="0.2">0 s</text>
<text x="635.70" y="695.80" font-size="12.40" letter-spacing="0.145" fill="#c4c4c4" stroke="#c4c4c4" stroke-width="0.2">400 ns</text>
<text x="745.10" y="695.80" font-size="12.40" letter-spacing="0.015" fill="#c4c4c4" stroke="#c4c4c4" stroke-width="0.2">800 ns</text>
<text transform="translate(856.10,695.80) scale(0.9566,1)" x="-0.00" y="0" font-size="12.40" fill="#c4c4c4" stroke="#c4c4c4" stroke-width="0.2">1.2 μs</text>
<text transform="translate(964.80,695.80) scale(0.9757,1)" x="-0.00" y="0" font-size="12.40" fill="#c4c4c4" stroke="#c4c4c4" stroke-width="0.2">1.6 μs</text>
<text transform="translate(23.38,20.00) scale(0.8903,1)" x="-0.00" y="0" font-size="19.00" fill="#f4f4f4" stroke="#f4f4f4" stroke-width="0.75">File</text>
<text transform="translate(97.38,20.00) scale(0.9851,1)" x="-0.00" y="0" font-size="19.00" fill="#f4f4f4" stroke="#f4f4f4" stroke-width="0.75">Edit</text>
<text x="175.88" y="20.00" font-size="19.00" letter-spacing="0.552" fill="#f4f4f4" stroke="#f4f4f4" stroke-width="0.75">Utility</text>
<text transform="translate(272.38,20.00) scale(0.9531,1)" x="-0.00" y="0" font-size="19.00" fill="#f4f4f4" stroke="#f4f4f4" stroke-width="0.75">Help</text>
<text transform="translate(770.05,20.00) scale(0.9605,1)" x="-0.00" y="0" font-size="17.60" fill="#f4f4f4" stroke="#f4f4f4" stroke-width="0.6">Sample: 1/1 Acqs</text>
<path d="M1145.7 4.1 H1163.9 L1160.8 9.1 H1156.4 V25.8 H1150.7 V9.1 H1145.7 Z" fill="#fff"/>
<text x="1157.50" y="25.80" font-size="30.00" font-weight="bold" fill="#ffffff">e</text>
<rect x="1175" y="4.1" width="5" height="21.7" fill="#fff"/>
<path d="M1175 25.8 H1180.6 L1190.9 9.3 H1185.3 Z" fill="#1fb8dc"/>
<path d="M1183.4 21.1 L1186.1 16.7 L1189.9 25.8 H1183.2 Z" fill="#fff"/>
<text transform="translate(1190.80,25.80) scale(0.8835,1)" x="-0.00" y="0" font-size="29.50" font-weight="bold" fill="#ffffff">tronix</text>
<text x="18.07" y="58.60" font-size="18.60" letter-spacing="0.425" fill="#ececec" stroke="#ececec" stroke-width="0.65">Waveform View</text>
<text transform="translate(1125.18,72.60) scale(0.9507,1)" x="-0.00" y="0" font-size="16.90" fill="#e8e8e8" stroke="#e8e8e8" stroke-width="0.55">Cursors</text>
<text x="1207.88" y="72.60" font-size="16.90" letter-spacing="0.440" fill="#e8e8e8" stroke="#e8e8e8" stroke-width="0.55">Callout</text>
<text x="1120.80" y="124.60" font-size="16.90" letter-spacing="-0.026" fill="#ffffff" stroke="#ffffff" stroke-width="0.8">Measure</text>
<text transform="translate(1210.00,124.60) scale(0.9395,1)" x="-0.00" y="0" font-size="16.90" fill="#ffffff" stroke="#ffffff" stroke-width="0.8">Search</text>
<text x="1207.88" y="183.20" font-size="16.90" letter-spacing="0.376" fill="#e8e8e8" stroke="#e8e8e8" stroke-width="0.55">More...</text>
<rect x="1142.2" y="168" width="21.2" height="18.6" fill="none" stroke="#b4b4b4" stroke-width="2" stroke-dasharray="3 2.4"/>
<circle cx="1155" cy="176.3" r="4.6" fill="none" stroke="#b4b4b4" stroke-width="1.8"/>
<line x1="1151.6" y1="179.7" x2="1146.5" y2="183.6" stroke="#b4b4b4" stroke-width="2.8" stroke-linecap="round"/>
<path d="M1158.8 182.2 L1167 187.5 L1163.6 188.3 L1166.4 191.3 L1164.6 192.3 L1162 189.2 L1160.3 191.5 Z" fill="#b4b4b4"/>
<text transform="translate(1119.60,237.90) scale(0.9773,1)" x="-0.00" y="0" font-size="16.20" font-weight="bold" fill="#f39a2e">Meas 1</text>
<rect x="1245" y="227.5" width="24.3" height="12.4" rx="6.2" fill="#f39a2e" stroke="#6a4010" stroke-width="0.8"/>
<text x="1249.60" y="238.00" font-size="10.50" letter-spacing="0.181" fill="#2a2a2a" stroke="#2a2a2a" stroke-width="0.4">D0</text>
<text transform="translate(1119.80,259.60) scale(0.9758,1)" x="-0.00" y="0" font-size="16.50" fill="#2e2e2e" stroke="#2e2e2e" stroke-width="0.4">Unit Interval</text>
<text x="1119.80" y="280.40" font-size="16.50" letter-spacing="0.025" fill="#2e2e2e" stroke="#2e2e2e" stroke-width="0.4">μ': 800.0 ns</text>
<text transform="translate(1119.80,309.90) scale(0.9341,1)" x="-0.00" y="0" font-size="16.80" fill="#f2f2f2" stroke="#f2f2f2" stroke-width="0.4">Search 1</text>
<rect x="1244.6" y="298.4" width="25.2" height="14.6" rx="7.3" fill="#a468ba" stroke="#3a3a3a" stroke-width="1"/>
<text x="1250.70" y="310.80" font-size="11.00" fill="#1e1e1e" stroke="#1e1e1e" stroke-width="0.4">B1</text>
<text transform="translate(1119.80,331.60) scale(0.9101,1)" x="-0.00" y="0" font-size="16.50" fill="#222222" stroke="#222222" stroke-width="0.4">Bus: Parallel</text>
<text transform="translate(1119.80,352.40) scale(0.9057,1)" x="-0.00" y="0" font-size="16.50" fill="#222222" stroke="#222222" stroke-width="0.4">Search: Bus</text>
<text transform="translate(1119.80,374.30) scale(0.8970,1)" x="-0.00" y="0" font-size="16.50" fill="#222222" stroke="#222222" stroke-width="0.4">Events: 1</text>
<path d="M1250.1 342.2 H1271 L1260.5 357 Z" fill="#cc80bb"/>
<ellipse cx="1102" cy="366.2" rx="2" ry="1.7" fill="#cfcfcf"/>
<ellipse cx="1102" cy="372.1" rx="2" ry="1.7" fill="#cfcfcf"/>
<ellipse cx="1102" cy="378" rx="2" ry="1.7" fill="#cfcfcf"/>
<text x="9.60" y="725.00" font-size="16.00" letter-spacing="0.333" fill="#f7941d" stroke="#f7941d" stroke-width="0.4">D15-D0</text>
<text transform="translate(9.60,746.60) scale(0.9829,1)" x="-0.00" y="0" font-size="15.80" fill="#3a3a3a" stroke="#3a3a3a" stroke-width="0.4">D15:</text>
<text transform="translate(9.60,767.60) scale(0.9112,1)" x="-0.00" y="0" font-size="15.80" fill="#222222" stroke="#222222" stroke-width="0.4">D7</text>
<text x="40.40" y="767.60" font-size="15.80" fill="#222222" stroke="#222222" stroke-width="0.4">:</text>
<path d="M44.9 739.0 L47.3 735.4 L49.699999999999996 739.0 Z M44.9 745.6999999999999 L47.3 749.3 L49.699999999999996 745.6999999999999 Z" fill="#151515"/><line x1="47.3" y1="737.4" x2="47.3" y2="747.4" stroke="#151515" stroke-width="1.8"/>
<path d="M51.72 739.0 L54.12 735.4 L56.519999999999996 739.0 Z M51.72 745.6999999999999 L54.12 749.3 L56.519999999999996 745.6999999999999 Z" fill="#151515"/><line x1="54.12" y1="737.4" x2="54.12" y2="747.4" stroke="#151515" stroke-width="1.8"/>
<path d="M58.54 739.0 L60.94 735.4 L63.339999999999996 739.0 Z M58.54 745.6999999999999 L60.94 749.3 L63.339999999999996 745.6999999999999 Z" fill="#151515"/><line x1="60.94" y1="737.4" x2="60.94" y2="747.4" stroke="#151515" stroke-width="1.8"/>
<path d="M65.35999999999999 739.0 L67.75999999999999 735.4 L70.16 739.0 Z M65.35999999999999 745.6999999999999 L67.75999999999999 749.3 L70.16 745.6999999999999 Z" fill="#151515"/><line x1="67.75999999999999" y1="737.4" x2="67.75999999999999" y2="747.4" stroke="#151515" stroke-width="1.8"/>
<path d="M72.17999999999999 739.0 L74.58 735.4 L76.98 739.0 Z M72.17999999999999 745.6999999999999 L74.58 749.3 L76.98 745.6999999999999 Z" fill="#151515"/><line x1="74.58" y1="737.4" x2="74.58" y2="747.4" stroke="#151515" stroke-width="1.8"/>
<path d="M79.0 739.0 L81.4 735.4 L83.80000000000001 739.0 Z M79.0 745.6999999999999 L81.4 749.3 L83.80000000000001 745.6999999999999 Z" fill="#151515"/><line x1="81.4" y1="737.4" x2="81.4" y2="747.4" stroke="#151515" stroke-width="1.8"/>
<path d="M85.82 739.0 L88.22 735.4 L90.62 739.0 Z M85.82 745.6999999999999 L88.22 749.3 L90.62 745.6999999999999 Z" fill="#151515"/><line x1="88.22" y1="737.4" x2="88.22" y2="747.4" stroke="#151515" stroke-width="1.8"/>
<path d="M92.63999999999999 739.0 L95.03999999999999 735.4 L97.44 739.0 Z M92.63999999999999 745.6999999999999 L95.03999999999999 749.3 L97.44 745.6999999999999 Z" fill="#151515"/><line x1="95.03999999999999" y1="737.4" x2="95.03999999999999" y2="747.4" stroke="#151515" stroke-width="1.8"/>
<path d="M44.9 760.4 L47.3 756.8 L49.699999999999996 760.4 Z M44.9 767.0999999999999 L47.3 770.6999999999999 L49.699999999999996 767.0999999999999 Z" fill="#151515"/><line x1="47.3" y1="758.8" x2="47.3" y2="768.8" stroke="#151515" stroke-width="1.8"/>
<path d="M51.72 760.4 L54.12 756.8 L56.519999999999996 760.4 Z M51.72 767.0999999999999 L54.12 770.6999999999999 L56.519999999999996 767.0999999999999 Z" fill="#151515"/><line x1="54.12" y1="758.8" x2="54.12" y2="768.8" stroke="#151515" stroke-width="1.8"/>
<path d="M58.54 760.4 L60.94 756.8 L63.339999999999996 760.4 Z M58.54 767.0999999999999 L60.94 770.6999999999999 L63.339999999999996 767.0999999999999 Z" fill="#151515"/><line x1="60.94" y1="758.8" x2="60.94" y2="768.8" stroke="#151515" stroke-width="1.8"/>
<path d="M65.35999999999999 760.4 L67.75999999999999 756.8 L70.16 760.4 Z M65.35999999999999 767.0999999999999 L67.75999999999999 770.6999999999999 L70.16 767.0999999999999 Z" fill="#151515"/><line x1="67.75999999999999" y1="758.8" x2="67.75999999999999" y2="768.8" stroke="#151515" stroke-width="1.8"/>
<path d="M72.17999999999999 760.4 L74.58 756.8 L76.98 760.4 Z M72.17999999999999 767.0999999999999 L74.58 770.6999999999999 L76.98 767.0999999999999 Z" fill="#151515"/><line x1="74.58" y1="758.8" x2="74.58" y2="768.8" stroke="#151515" stroke-width="1.8"/>
<path d="M79.0 760.4 L81.4 756.8 L83.80000000000001 760.4 Z M79.0 767.0999999999999 L81.4 770.6999999999999 L83.80000000000001 767.0999999999999 Z" fill="#151515"/><line x1="81.4" y1="758.8" x2="81.4" y2="768.8" stroke="#151515" stroke-width="1.8"/>
<path d="M85.82 760.4 L88.22 756.8 L90.62 760.4 Z M85.82 767.0999999999999 L88.22 770.6999999999999 L90.62 767.0999999999999 Z" fill="#151515"/><line x1="88.22" y1="758.8" x2="88.22" y2="768.8" stroke="#151515" stroke-width="1.8"/>
<path d="M92.63999999999999 760.4 L95.03999999999999 756.8 L97.44 760.4 Z M92.63999999999999 767.0999999999999 L95.03999999999999 770.6999999999999 L97.44 767.0999999999999 Z" fill="#151515"/><line x1="95.03999999999999" y1="758.8" x2="95.03999999999999" y2="768.8" stroke="#151515" stroke-width="1.8"/>
<text transform="translate(113.60,725.00) scale(0.9239,1)" x="-0.00" y="0" font-size="16.00" fill="#111111" stroke="#111111" stroke-width="0.4">Bus 1</text>
<text transform="translate(113.60,746.60) scale(0.9145,1)" x="-0.00" y="0" font-size="16.00" fill="#1a1a1a" stroke="#1a1a1a" stroke-width="0.4">Parallel</text>
<rect x="557.7" y="718.9" width="37.4" height="3.3" rx="1.65" fill="#fff02a"/>
<text x="575.9" y="766" font-size="22.5" text-anchor="middle" fill="#e8e8e8">1</text>
<rect x="612.1" y="718.9" width="37.4" height="3.3" rx="1.65" fill="#22d0e0"/>
<text x="630.3" y="766" font-size="22.5" text-anchor="middle" fill="#e8e8e8">2</text>
<rect x="666.7" y="718.9" width="37.4" height="3.3" rx="1.65" fill="#e83a5a"/>
<text x="684.9" y="766" font-size="22.5" text-anchor="middle" fill="#e8e8e8">3</text>
<rect x="721.2" y="718.9" width="37.4" height="3.3" rx="1.65" fill="#88d030"/>
<text x="739.4" y="766" font-size="22.5" text-anchor="middle" fill="#e8e8e8">4</text>
<text transform="translate(782.40,746.00) scale(0.9738,1)" x="-0.00" y="0" font-size="17.00" fill="#ececec" stroke="#ececec" stroke-width="0.4">Math</text>
<text transform="translate(789.60,763.70) scale(0.8684,1)" x="-0.00" y="0" font-size="17.00" fill="#ececec" stroke="#ececec" stroke-width="0.4">Ref</text>
<text transform="translate(788.40,781.40) scale(0.8467,1)" x="-0.00" y="0" font-size="17.00" fill="#ececec" stroke="#ececec" stroke-width="0.4">Bus</text>
<text transform="translate(840.60,754.70) scale(0.8412,1)" x="-0.00" y="0" font-size="17.00" fill="#ececec" stroke="#ececec" stroke-width="0.4">AFG</text>
<text transform="translate(846.00,772.70) scale(0.7816,1)" x="-0.00" y="0" font-size="17.00" fill="#ececec" stroke="#ececec" stroke-width="0.4">PG</text>
<text x="899.40" y="726.00" font-size="17.50" letter-spacing="0.335" fill="#f2f2f2" stroke="#f2f2f2" stroke-width="0.4">Horizontal</text>
<text x="898.20" y="746.60" font-size="15.80" letter-spacing="0.152" fill="#222222" stroke="#222222" stroke-width="0.4">400 ns/div</text>
<text transform="translate(898.20,767.30) scale(0.9486,1)" x="-0.00" y="0" font-size="15.80" fill="#222222" stroke="#222222" stroke-width="0.4">SR: 1.25 GS/s</text>
<text x="898.20" y="789.80" font-size="15.80" letter-spacing="-0.148" fill="#222222" stroke="#222222" stroke-width="0.4">RL: 5 kpts</text>
<text x="1031.40" y="726.00" font-size="17.50" letter-spacing="-0.096" fill="#f2f2f2" stroke="#f2f2f2" stroke-width="0.4">Trigger</text>
<text x="1099.80" y="726.00" font-size="17.50" fill="#f2f2f2" stroke="#f2f2f2" stroke-width="0.4">N</text>
<rect x="1115.6" y="713.8" width="33" height="17.2" rx="5" fill="#fff23a" stroke="#2a2a2a" stroke-width="1"/>
<text x="1131.5" y="725.5" font-size="14" text-anchor="middle" fill="#222">1</text>
<path d="M1029.4 748.2 H1033.6 L1042.6 737.4 H1046.8" fill="none" stroke="#50508c" stroke-width="1.6"/>
<text transform="translate(1057.60,746.60) scale(0.9783,1)" x="-0.00" y="0" font-size="15.80" fill="#222222" stroke="#222222" stroke-width="0.4">0 V</text>
<text x="1188.80" y="734.60" font-size="15.60" font-weight="bold" letter-spacing="0.367" fill="#ffffff">Stopped</text>
<text x="1174.80" y="769.40" font-size="16.20" letter-spacing="-0.129" fill="#222222" stroke="#222222" stroke-width="0.4">09 Sep 2022</text>
<text x="1177.00" y="788.00" font-size="16.20" letter-spacing="0.472" fill="#222222" stroke="#222222" stroke-width="0.4">4:02:22 AM</text>
</svg>
</body></html>
